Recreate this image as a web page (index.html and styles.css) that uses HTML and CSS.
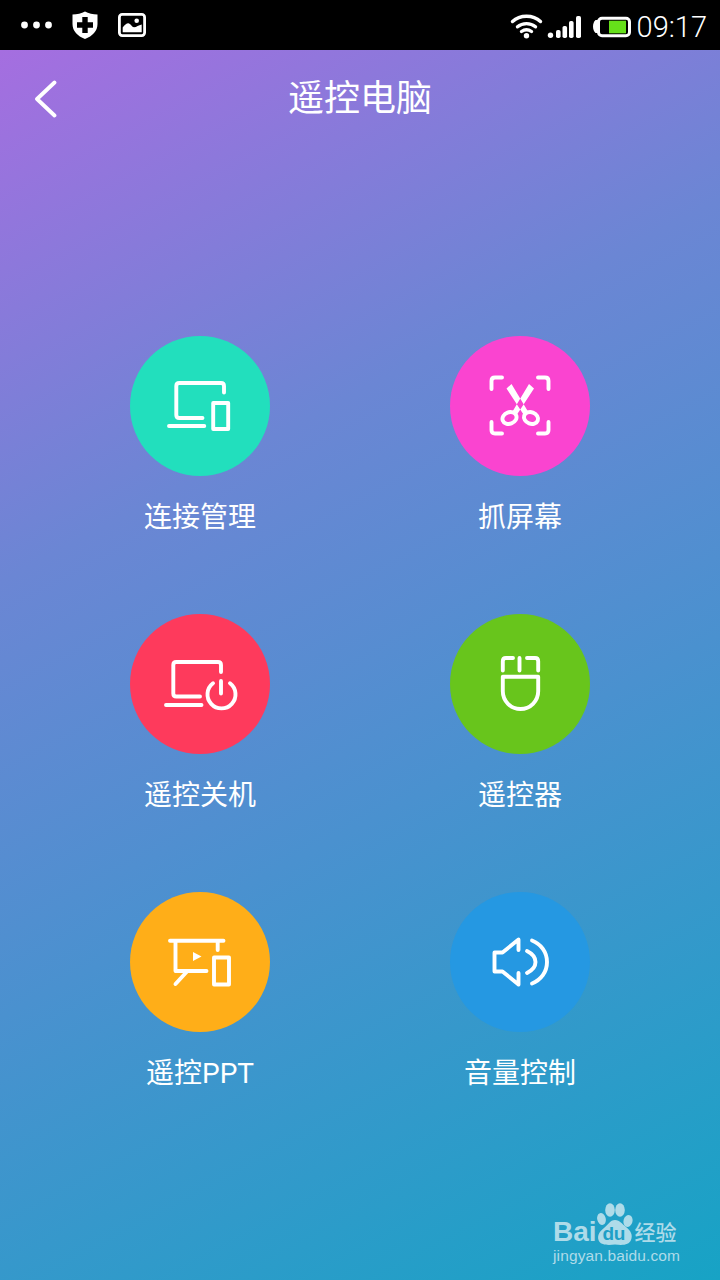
FILE: index.html
```html
<!DOCTYPE html>
<html lang="zh">
<head>
<meta charset="utf-8">
<title>遥控电脑</title>
<link rel="stylesheet" href="styles.css">
</head>
<body>
<div class="phone">
  <div class="status">
    <div class="status-left">
      <svg class="dots" width="32" height="8" viewBox="0 0 32 8"><circle cx="3.500" cy="4" r="3.400"/><circle cx="15.500" cy="4" r="3.400"/><circle cx="27.500" cy="4" r="3.400"/></svg>
      <svg class="shield" width="26" height="28" viewBox="0 0 26 28"><path class="w" d="M13 0.500C16.500 2.500 21 3.500 25.500 3.500V13C25.500 20 20.500 25 13 28C5.500 25 0.500 20 0.500 13V3.500C5 3.500 9.500 2.500 13 0.500Z"/><path class="k" d="M10.300 6H15.700V11.300H21V16.700H15.700V22H10.300V16.700H5V11.300H10.300Z"/></svg>
      <svg class="pic" width="28" height="24" viewBox="0 0 28 24"><rect class="ws" x="1.400" y="1.400" width="25.200" height="21.200" rx="2.800"/><circle class="w" cx="18.700" cy="7.700" r="2.300"/><path class="w" d="M4.700 19.300V14.500C6.500 12 8.500 10.300 10.300 10.300C12.500 10.300 14 14.300 16 14.300C18.500 14.300 20.500 12 23.700 11.500V19.300Z"/></svg>
    </div>
    <div class="status-right">
      <svg class="wifi" width="33" height="26" viewBox="0 0 33 26"><path class="ws3" d="M2.500 8.500C10 1.500 23 1.500 30.500 8.500M7.500 13.800C12.500 9.500 20.500 9.500 25.500 13.800M11.500 18.500C14.500 16.300 18.500 16.300 21.500 18.500"/><circle class="w" cx="16.500" cy="22.800" r="2.700"/></svg>
      <svg class="signal" width="34" height="24" viewBox="0 0 34 24"><circle class="w" cx="3.500" cy="21.300" r="2.700"/><rect class="w" x="9" y="16" width="4.600" height="8" rx="1.800"/><rect class="w" x="15.500" y="12" width="4.600" height="12" rx="1.800"/><rect class="w" x="22" y="7" width="4.600" height="17" rx="1.800"/><rect class="w" x="29" y="2" width="5" height="22" rx="1.800"/></svg>
      <svg class="battery" width="38" height="24" viewBox="0 0 38 24"><path class="w" d="M5 5H2.500C1 6.500 0 8.500 0 11.500C0 14.500 1 16.500 2.500 18H5Z"/><rect class="ws-b" x="5.500" y="3.200" width="31" height="17.600" rx="3.500"/><rect class="green" x="16" y="5.700" width="17" height="12.600"/></svg>
      <span class="time">09:17</span>
    </div>
  </div>

  <div class="header">
    <svg class="back" width="24" height="38" viewBox="0 0 24 38"><path class="line4" d="M21.500 2.500L4 19L21.500 35.500"/></svg>
    <h1 class="title">遥控电脑</h1>
  </div>

  <div class="grid">
    <a class="item">
      <span class="circle c-teal">
        <svg class="icon" viewBox="0 0 140 140"><path class="ln" d="M94 56.500V50Q94 47 91 47H49.300Q46.300 47 46.300 50V79Q46.300 82 49.300 82H72.500M39 90H74.300"/><rect class="ln" x="83.200" y="67" width="15" height="26"/></svg>
      </span>
      <span class="label">连接管理</span>
    </a>
    <a class="item">
      <span class="circle c-pink">
        <svg class="icon" viewBox="0 0 140 140"><path class="ln" d="M52 41.500H45Q41.500 41.500 41.500 45V53M88 41.500H95Q98.500 41.500 98.500 45V53M41.500 86V94Q41.500 97.500 45 97.500H52M98.500 86V94Q98.500 97.500 95 97.500H88"/><path class="w" d="M56.500 52.500L61.500 48L78 75.500L73.500 78.500ZM84 52.500L79 48L62.500 75.500L67 78.500Z"/><circle class="dot" cx="70" cy="69.500" r="1.200"/><ellipse class="ln" cx="59.500" cy="82" rx="7.200" ry="5.800" transform="rotate(-20 59.500 82)"/><ellipse class="ln" cx="81" cy="82" rx="7.200" ry="5.800" transform="rotate(20 81 82)"/></svg>
      </span>
      <span class="label">抓屏幕</span>
    </a>
    <a class="item">
      <span class="circle c-red">
        <svg class="icon" viewBox="0 0 140 140"><path class="ln" d="M91 58V51Q91 48 88 48H46.300Q43.300 48 43.300 51V79.500Q43.300 82.500 46.300 82.500H70M36 91H71.500"/><path class="ln" d="M83 69.300A14 14 0 1 0 100 69.300M91 67V79.500"/></svg>
      </span>
      <span class="label">遥控关机</span>
    </a>
    <a class="item">
      <span class="circle c-green">
        <svg class="icon" viewBox="0 0 140 140"><path class="ln" d="M63 44H56Q52.800 44 52.800 47.200V56.500M77 44H85Q88.200 44 88.200 47.200V56.500M69.500 44V56.500"/><path class="ln" d="M52.800 62.700H88.200V77.300A17.700 17.700 0 0 1 52.800 77.300Z"/></svg>
      </span>
      <span class="label">遥控器</span>
    </a>
    <a class="item">
      <span class="circle c-amber">
        <svg class="icon" viewBox="0 0 140 140"><path class="ln" d="M40 48.700H93.500M45.500 49V79H76.500M87.700 49V58M57 79.500L45.500 92"/><path class="w" d="M63 60L71.500 64.500L63 69Z"/><rect class="ln" x="84" y="65.500" width="15" height="27"/></svg>
      </span>
      <span class="label">遥控PPT</span>
    </a>
    <a class="item">
      <span class="circle c-blue">
        <svg class="icon" viewBox="0 0 140 140"><path class="ln" d="M68.500 58V47.500L52.500 60.500H44.500V79.500H52.500L68.500 92.500V81"/><path class="ln" d="M77 59C82 61.500 85.500 65 85.500 70C85.500 75 82 78.500 77 81M82 48.500C91 52 97 60 97 70C97 80 91 88 82 91.500"/></svg>
      </span>
      <span class="label">音量控制</span>
    </a>
  </div>

  <div class="watermark">
    <div class="wm-top">
      <span class="wm-bai">Bai</span>
      <span class="wm-paw">
        <svg width="40" height="44" viewBox="0 0 40 44"><ellipse class="pw" cx="6.500" cy="17" rx="4.300" ry="6" transform="rotate(-15 6.500 17)"/><ellipse class="pw" cx="15" cy="8" rx="4.800" ry="6.800"/><ellipse class="pw" cx="25" cy="8" rx="4.800" ry="6.800"/><ellipse class="pw" cx="33" cy="19" rx="4.500" ry="6" transform="rotate(15 33 19)"/><path class="pw" d="M20 18C25 18 27 22 31 25C36 29 38 33 36 38C34 43 28 43.500 20 42.500C12 43.500 5 43 3.500 38C2 33 5 29 9 26C13 23 15 18 20 18Z"/></svg>
        <span class="wm-du">du</span>
      </span>
      <span class="wm-jy">经验</span>
    </div>
    <div class="wm-url">jingyan.baidu.com</div>
  </div>
</div>
</body>
</html>
```

FILE: styles.css
```css
* { box-sizing: border-box; }
html, body { margin: 0; padding: 0; }
body { width: 720px; height: 1280px; overflow: hidden; font-family: Roboto, "Noto Sans CJK SC", sans-serif; }
.phone { position: relative; width: 720px; height: 1280px; background: #000; }
.phone::before { content: ""; position: absolute; left: 0; right: 0; top: 50px; bottom: 0; background: linear-gradient(152deg, #a56ee0 0%, #6b86d4 33%, #4a91cf 60%, #17a3c5 100%); }

.status { position: relative; height: 50px; background: #000; display: flex; justify-content: space-between; align-items: center; padding: 0 13px 0 21px; }
.status-left { display: flex; align-items: center; }
.status-right { display: flex; align-items: center; }
.dots { margin-right: 19px; }
.shield { margin-right: 20px; }
.wifi { margin-right: 4px; margin-top: 1px; }
.signal { margin-right: 12px; margin-top: 2px; }
.battery { margin-right: 6px; margin-top: 4px; }
.time { font-family: Roboto, "Liberation Sans", sans-serif; font-weight: 300; font-size: 29px; line-height: 1; color: #fff; margin-top: 5px; }

.dots circle, .w { fill: #fff; }
.k { fill: #000; }
.dot { fill: #fa44d0; }
.ws { fill: none; stroke: #fff; stroke-width: 2.800; }
.ws-b { fill: none; stroke: #fff; stroke-width: 3; }
.ws3 { fill: none; stroke: #fff; stroke-width: 3.400; stroke-linecap: round; }
.green { fill: #66e01a; }

.header { position: relative; height: 286px; }
.back { position: absolute; left: 33px; top: 30px; }
.line4 { fill: none; stroke: #fff; stroke-width: 3.800; stroke-linecap: round; stroke-linejoin: round; }
.title { margin: 0; padding-top: 23px; text-align: center; font-size: 36px; line-height: 52px; font-weight: 400; color: #fff; }

.grid { position: relative; display: grid; grid-template-columns: 320px 320px; justify-content: center; row-gap: 61px; }
.item { display: flex; flex-direction: column; align-items: center; height: 217px; }
.circle { width: 140px; height: 140px; border-radius: 50%; display: block; }
.icon { display: block; width: 140px; height: 140px; }
.c-teal { background: #22dfbd; }
.c-pink { background: #fa44d0; }
.c-red { background: #fe3a5c; }
.c-green { background: #68c51c; }
.c-amber { background: #ffae18; }
.c-blue { background: #2598e2; }
.ln { fill: none; stroke: #fff; stroke-width: 3.900; stroke-linecap: round; stroke-linejoin: round; }
.label { margin-top: 22px; font-size: 28px; line-height: 40px; color: #fff; font-weight: 400; white-space: nowrap; }

.watermark { position: absolute; left: 553px; top: 1200px; width: 130px; color: #aedbe9; }
.wm-top { display: flex; align-items: flex-end; height: 46px; }
.wm-bai { font-family: "Liberation Sans", sans-serif; font-weight: 700; font-size: 28px; line-height: 36px; margin-bottom: -4px; }
.wm-paw { position: relative; width: 40px; height: 44px; margin-left: -2px; }
.wm-paw svg { display: block; width: 40px; height: 44px; }
.pw { fill: #aedbe9; }
.wm-du { position: absolute; left: 8px; top: 21px; font-family: "Liberation Sans", sans-serif; font-size: 19px; font-weight: 700; line-height: 22px; color: #1f9fc6; letter-spacing: -0.500px; }
.wm-jy { font-family: "Noto Sans CJK SC", sans-serif; font-size: 21px; line-height: 36px; font-weight: 500; margin-bottom: -3px; white-space: nowrap; }
.wm-url { font-family: "Liberation Sans", sans-serif; font-size: 15.500px; line-height: 20px; white-space: nowrap; letter-spacing: 0.130px; }
```
